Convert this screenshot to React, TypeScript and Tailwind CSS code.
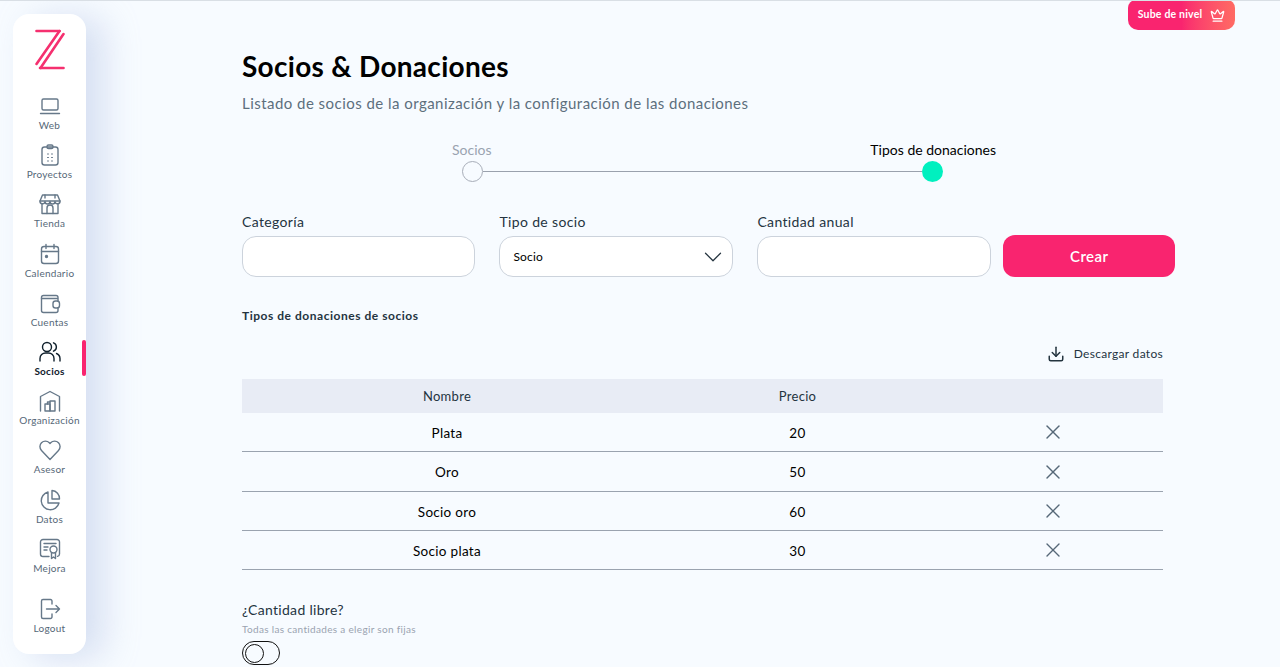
import { Crown, Download, X, ChevronDown } from "lucide-react";
import type { ReactNode } from "react";

const font = { fontFamily: "Lato, 'Open Sans', sans-serif" };

function Ico({ children, dark }: { children: ReactNode; dark?: boolean }) {
  return (
    <svg
      viewBox="0 0 24 24"
      className={`h-[24px] w-[24px] ${dark ? "text-[#10202c]" : "text-[#667889]"}`}
      fill="none"
      stroke="currentColor"
      strokeWidth="1.4"
      strokeLinecap="round"
      strokeLinejoin="round"
    >
      {children}
    </svg>
  );
}

const navItems: { label: string; active?: boolean; icon: ReactNode }[] = [
  {
    label: "Web",
    icon: (
      <>
        <rect x="4" y="5" width="16" height="11" rx="1.5" />
        <path d="M2.5 19.5h19" />
      </>
    ),
  },
  {
    label: "Proyectos",
    icon: (
      <>
        <rect x="4" y="4" width="16" height="18" rx="2.5" />
        <rect x="9" y="2" width="6" height="3.5" rx="1.5" />
        <path d="M9.5 11h1M13.5 11h1M9.5 14.5h1M13.5 14.5h1M9.5 18h1M13.5 18h1" strokeWidth="1" />
      </>
    ),
  },
  {
    label: "Tienda",
    icon: (
      <>
        <path d="M4.5 3h15l2.5 6a2.500 2.500 0 0 1-5 .5 2.500 2.500 0 0 1-5 0 2.500 2.500 0 0 1-5 0 2.500 2.500 0 0 1-5-.5z" />
        <path d="M4 12v9.500h16V12M2 9h20" />
        <path d="M9 21.500V16a3 3 0 0 1 6 0v5.500M7 3v3M17 3v3" />
      </>
    ),
  },
  {
    label: "Calendario",
    icon: (
      <>
        <rect x="3.500" y="4.500" width="17" height="17" rx="2.500" />
        <path d="M3.500 9.500h17M8 2.500v4M16 2.500v4" />
        <circle cx="8.500" cy="14.500" r="1" fill="currentColor" />
      </>
    ),
  },
  {
    label: "Cuentas",
    icon: (
      <>
        <path d="M20 10V6.500a2 2 0 0 0-2-2H5.500a2 2 0 0 0-2 2v13a2 2 0 0 0 2 2H18a2 2 0 0 0 2-2V17" />
        <path d="M3.500 7.500h16" />
        <rect x="15" y="10" width="6.500" height="7" rx="2.500" />
      </>
    ),
  },
  {
    label: "Socios",
    active: true,
    icon: (
      <>
        <circle cx="9" cy="7" r="4.500" />
        <path d="M2 21v-2.500A5.500 5.500 0 0 1 7.500 13h3a5.500 5.500 0 0 1 5.500 5.500V21" />
        <path d="M15.500 2.800a4.500 4.500 0 0 1 0 8.400M18.500 13.500a5.500 5.500 0 0 1 3.500 5V21" />
      </>
    ),
  },
  {
    label: "Organización",
    icon: (
      <>
        <path d="M2.500 22V7.500L12 2.500l9.500 5V22" />
        <rect x="7" y="15" width="5" height="7" />
        <rect x="12" y="12" width="5" height="10" />
        <path d="M9.500 15v-2h2.500" />
      </>
    ),
  },
  {
    label: "Asesor",
    icon: <path d="M12 21.500 3.500 12.500a5.600 5.600 0 0 1 0-7.800 5.500 5.500 0 0 1 7.800 0l.7.8.7-.8a5.500 5.500 0 0 1 7.800 0 5.600 5.600 0 0 1 0 7.800z" />,
  },
  {
    label: "Datos",
    icon: (
      <>
        <path d="M10 4a9 9 0 1 0 11 11H10z" />
        <path d="M14 2.500a8 8 0 0 1 7.500 8.500H14z" />
      </>
    ),
  },
  {
    label: "Mejora",
    icon: (
      <>
        <path d="M11 19.500H5a2.500 2.500 0 0 1-2.500-2.500V5A2.500 2.500 0 0 1 5 2.500h14A2.500 2.500 0 0 1 21.500 5v12a2.500 2.500 0 0 1-2 2.400" />
        <path d="M6 6.500h12M6 10h4M6 13h3" />
        <circle cx="15.500" cy="12.500" r="3.500" />
        <path d="M13.500 15.500v6l2-1.500 2 1.500v-6" />
      </>
    ),
  },
];

function NavItem({ label, active, icon }: { label: string; active?: boolean; icon: ReactNode }) {
  return (
    <div className="relative flex h-[49.2px] flex-col items-center pt-[1px]">
      <Ico dark={active}>{icon}</Ico>
      <span className={`text-[10px] leading-[14px] tracking-[0.25px] ${active ? "font-bold text-[#10202c]" : "text-[#566878]"}`}>
        {label}
      </span>
      {active && <div className="absolute right-0 top-[1px] h-[36px] w-[4px] rounded-full bg-[#f9246f]" />}
    </div>
  );
}

function Sidebar() {
  return (
    <aside className="ml-[13px] mt-[13px] flex h-[640px] w-[73px] shrink-0 flex-col rounded-[16px] bg-white shadow-[18px_4px_34px_rgba(170,185,225,0.42)]">
      <div className="flex h-[79px] justify-center pt-[15px]">
        <svg viewBox="0 0 30 42" className="h-[42px] w-[30px]" fill="none" stroke="#f5306f" strokeWidth="2.6" strokeLinecap="round">
          <path d="M1.500 2h23" />
          <path d="M5 39h23.500" />
          <path d="M24.500 2 1.500 35" />
          <path d="M28.500 5 5.500 39" />
        </svg>
      </div>
      <nav className="flex flex-col">
        {navItems.map((it) => (
          <NavItem key={it.label} {...it} />
        ))}
      </nav>
      <div className="mt-[11px]">
        <NavItem
          label="Logout"
          icon={
            <>
              <path d="M14 7V4a1.500 1.500 0 0 0-1.500-1.500H5A1.500 1.500 0 0 0 3.500 4v16A1.500 1.500 0 0 0 5 21.500h7.500A1.500 1.500 0 0 0 14 20v-3" />
              <path d="M8.500 12h13M18 8.500l3.500 3.500-3.500 3.500" />
            </>
          }
        />
      </div>
    </aside>
  );
}

function Field({ label, children }: { label: string; children?: ReactNode }) {
  return (
    <div className="w-[234px]">
      <div className="text-[14px] leading-[18px] tracking-[0.35px] text-[#24343f]">{label}</div>
      <div className="mt-[5px] flex h-[41px] items-center justify-between rounded-[14px] border border-[#ccd3dc] bg-white pl-[13px] pr-[4px]">
        {children}
      </div>
    </div>
  );
}

const rows = [
  { name: "Plata", price: 20, h: "h-[39px]" },
  { name: "Oro", price: 50, h: "h-[40px]" },
  { name: "Socio oro", price: 60, h: "h-[39px]" },
  { name: "Socio plata", price: 30, h: "h-[39px]" },
];

export default function App() {
  return (
    <div style={font} className="relative flex h-[667px] w-[1280px] overflow-hidden border-t border-[#d9dfe5] bg-[#f7fbff]">
      <Sidebar />

      <main className="ml-[156px] w-[933px] shrink-0">
        <h1 className="mt-[46px] text-[28px] font-bold leading-[38px] tracking-[0.3px] text-black">Socios &amp; Donaciones</h1>
        <p className="mt-[8px] text-[15px] leading-[20px] tracking-[0.46px] text-[#5d6f7d]">
          Listado de socios de la organización y la configuración de las donaciones
        </p>

        {/* Stepper */}
        <div className="relative ml-[200px] mt-[28px] h-[43px] w-[554px]">
          <div className="flex justify-between text-[14px] leading-[18px]">
            <span className="ml-[10px] text-[#9aa3b0]">Socios</span>
            <span className="text-black">Tipos de donaciones</span>
          </div>
          <div className="absolute left-[20px] right-[53px] top-[20px] flex items-center">
            <div className="h-[21px] w-[21px] shrink-0 rounded-full border border-[#a7adb8] bg-[#f7fbff]" />
            <div className="h-[1px] flex-1 bg-[#9aa1ad]" />
            <div className="h-[21px] w-[21px] shrink-0 rounded-full bg-[#00f0bf]" />
          </div>
        </div>

        {/* Form */}
        <div className="mt-[29px] flex w-[933px] items-end">
          <Field label="Categoría" />
          <div className="ml-[24px]">
            <Field label="Tipo de socio">
              <span className="text-[12px] tracking-[0.2px] text-black">Socio</span>
              <ChevronDown className="h-[30px] w-[30px] text-[#24343f]" strokeWidth={1} />
            </Field>
          </div>
          <div className="ml-[24px]">
            <Field label="Cantidad anual" />
          </div>
          <button className="ml-[12px] h-[42px] w-[172px] rounded-[12px] bg-[#f9246f] text-[15px] font-semibold tracking-[0.4px] text-white">
            Crear
          </button>
        </div>

        <h2 className="mt-[31px] text-[12px] font-bold leading-[16px] tracking-[0.53px] text-[#24343f]">Tipos de donaciones de socios</h2>

        <div className="mt-[21px] flex w-[921px] items-center justify-end">
          <Download className="h-[18px] w-[18px] text-[#24343f]" strokeWidth={2} />
          <span className="ml-[9px] text-[12px] leading-[18px] tracking-[0.3px] text-[#24343f]">Descargar datos</span>
        </div>

        {/* Table */}
        <div className="mt-[16px] w-[921px]">
          <div className="grid h-[34px] grid-cols-[410px_291px_220px] items-center bg-[#e8ecf5] pt-[1px] text-[13px] tracking-[0.3px] text-[#24343f]">
            <span className="text-center">Nombre</span>
            <span className="text-center">Precio</span>
            <span />
          </div>
          {rows.map((r) => (
            <div
              key={r.name}
              className={`grid ${r.h} grid-cols-[410px_291px_220px] items-center border-b border-[#9aa3af] text-[13.500px] tracking-[0.3px] text-black`}
            >
              <span className="pt-[2px] text-center">{r.name}</span>
              <span className="pt-[2px] text-center">{r.price}</span>
              <span className="flex justify-center">
                <X className="h-[24px] w-[24px] text-[#566878]" strokeWidth={1.4} />
              </span>
            </div>
          ))}
        </div>

        <div className="mt-[31px] text-[14px] leading-[18px] tracking-[0.3px] text-[#24343f]">¿Cantidad libre?</div>
        <div className="mt-[3px] text-[10px] leading-[14px] tracking-[0.32px] text-[#9aa3b0]">Todas las cantidades a elegir son fijas</div>
        <div className="mt-[5px] flex h-[24px] w-[38px] items-center rounded-full border border-[#111] px-[2px]">
          <div className="h-[19px] w-[19px] rounded-full border border-[#111]" />
        </div>
      </main>

      <button className="absolute left-[1128px] top-[-1px] flex h-[30px] w-[107px] items-center justify-center gap-[8px] rounded-b-[10px] rounded-t-[8px] bg-gradient-to-r from-[#f9246f] from-50% to-[#ff6a63] text-[10.500px] font-bold tracking-[0.2px] text-white">
        Sube de nivel
        <Crown className="h-[15px] w-[15px]" strokeWidth={2} />
      </button>
    </div>
  );
}
